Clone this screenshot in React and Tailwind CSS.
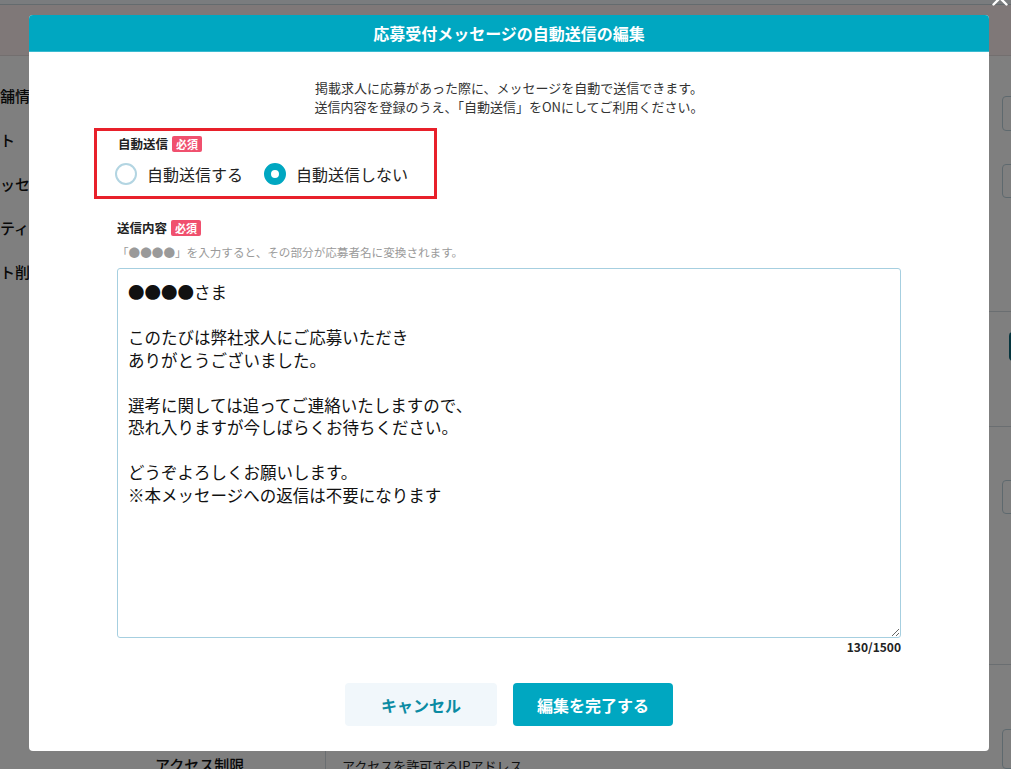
import React from "react";
import { X } from "lucide-react";

const message = `●●●●さま

このたびは弊社求人にご応募いただき
ありがとうございました。

選考に関しては追ってご連絡いたしますので、
恐れ入りますが今しばらくお待ちください。

どうぞよろしくお願いします。
※本メッセージへの返信は不要になります`;

const sideItems = [
  { label: "店舗情報", cls: "ml-[-15px]" },
  { label: "アカウント", cls: "ml-[-60px]" },
  { label: "メッセージ", cls: "ml-[-15px]" },
  { label: "セキュリティ", cls: "ml-[-60px]" },
  { label: "アカウント削除", cls: "ml-[-60px]" },
];

const Required = () => (
  <span className="ml-[4px] inline-flex h-[16px] items-center rounded-[2px] bg-[#f0506e] px-[4px] text-[11px] font-bold leading-none text-white">
    必須
  </span>
);

const Radio = ({ checked, label }) => (
  <label className="flex items-center gap-[10px]">
    {checked ? (
      <span className="h-[22px] w-[22px] rounded-full border-[7px] border-[#00a7c1] bg-white" />
    ) : (
      <span className="h-[22px] w-[22px] rounded-full border-2 border-[#b3d5e2] bg-white" />
    )}
    <span className="text-[16px] leading-[22px] text-[#222]">{label}</span>
  </label>
);

const Background = () => (
  <div className="flex h-full w-full flex-col bg-white">
    <div className="h-[5px] border-b border-[#c9d6dc] bg-[#f4f9fc]" />
    <div className="h-[55px] border-b border-[#e6dede] bg-[#fff0f0]" />
    <div className="flex flex-1">
      <div className="flex w-[326px] shrink-0 flex-col border-r border-[#d5dde2] pt-[30px]">
        {sideItems.map((it) => (
          <div
            key={it.label}
            className={`h-[44px] whitespace-nowrap text-[15px] font-medium leading-[20px] text-[#111] ${it.cls}`}
          >
            {it.label}
          </div>
        ))}
        <div className="flex-1" />
        <div className="mb-[-6px] whitespace-nowrap pl-[155px] text-[15px] font-medium leading-[20px] text-[#111]">
          アクセス制限
        </div>
      </div>
      <div className="flex w-[900px] shrink-0 flex-col">
        <div className="flex h-[256px] flex-col border-b border-[#d5dde2] pt-[40px]">
          <div className="ml-[676px] h-[35px] w-[200px] rounded border border-[#bcd2dd]" />
          <div className="ml-[676px] mt-[33px] h-[34px] w-[200px] rounded border border-[#bcd2dd]" />
        </div>
        <div className="flex h-[115px] flex-col border-b border-[#d5dde2] pt-[20px]">
          <div className="ml-[683px] h-[29px] w-[80px] rounded bg-[#0c6a7c]" />
        </div>
        <div className="flex h-[238px] flex-col border-b border-[#d5dde2] pt-[53px]">
          <div className="ml-[676px] h-[34px] w-[200px] rounded border border-[#bcd2dd]" />
        </div>
        <div className="flex flex-1">
          <div className="mb-[-6px] w-[676px] shrink-0 self-end whitespace-nowrap pl-[16px] text-[13px] leading-[18px] text-[#222]">
            アクセスを許可するIPアドレス
          </div>
          <div className="mt-[64px] h-[40px] w-[200px] rounded border border-[#bcd2dd]" />
        </div>
      </div>
    </div>
  </div>
);

export default function App() {
  return (
    <div
      className="relative h-[769px] w-[1011px] overflow-hidden"
      style={{ fontFamily: '"Noto Sans CJK JP", "Noto Sans", sans-serif' }}
    >
      <Background />
      <div className="absolute inset-0 flex justify-center bg-black/50 pl-[7px] pt-[15px]">
        <div className="flex h-[736px] w-[960px] flex-col overflow-hidden rounded-[4px] bg-white">
          <div className="flex h-[37px] shrink-0 items-center justify-center border-b border-[#3bbad0] bg-[#00a7c1]">
            <h1 className="text-[16px] font-bold leading-none text-white">
              応募受付メッセージの自動送信の編集
            </h1>
          </div>
          <div className="flex flex-1 flex-col px-[88px] pt-[26px]">
            <p className="text-center text-[13px] leading-[19px] text-[#333]">
              掲載求人に応募があった際に、メッセージを自動で送信できます。
              <br />
              送信内容を登録のうえ、「自動送信」をONにしてご利用ください。
            </p>

            <div className="ml-[-23px] mt-[12px] w-[343px] border-[3px] border-[#e8202a] pb-[11px] pl-[18px] pt-[5px]">
              <div className="ml-[3px] flex items-center">
                <span className="text-[12.5px] font-bold leading-[16px] text-[#222]">自動送信</span>
                <Required />
              </div>
              <div className="mt-[11px] flex items-center gap-[21px]">
                <Radio label="自動送信する" />
                <Radio checked label="自動送信しない" />
              </div>
            </div>

            <div className="mt-[21px] flex items-center">
              <span className="text-[12.5px] font-bold leading-[16px] text-[#222]">送信内容</span>
              <Required />
            </div>
            <p className="mt-[8px] whitespace-nowrap text-[11.6px] leading-[16px] text-[#9a9a9a]">
              「●●●●」を入力すると、その部分が応募者名に変換されます。
            </p>
            <textarea
              readOnly
              defaultValue={message}
              className="mt-[8px] h-[370px] w-full rounded-[3px] border border-[#a6cfe0] px-[10px] py-[12px] text-[16.5px] leading-[22.5px] text-[#111] outline-none"
            />
            <div className="mt-[1px] text-right text-[12px] font-bold leading-[16px] text-[#222]">
              130/1500
            </div>

            <div className="mt-[28px] flex justify-center gap-[16px]">
              <button className="h-[43px] w-[152px] rounded-[4px] bg-[#f1f7fb] text-[16px] font-bold text-[#0b8ba3]">
                キャンセル
              </button>
              <button className="h-[43px] w-[160px] rounded-[4px] bg-[#00a7c1] text-[16px] font-bold text-white">
                編集を完了する
              </button>
            </div>
          </div>
        </div>
      </div>
      <button className="absolute left-[987px] top-[-15px] text-white">
        <X size={26} strokeWidth={2.2} />
      </button>
    </div>
  );
}
